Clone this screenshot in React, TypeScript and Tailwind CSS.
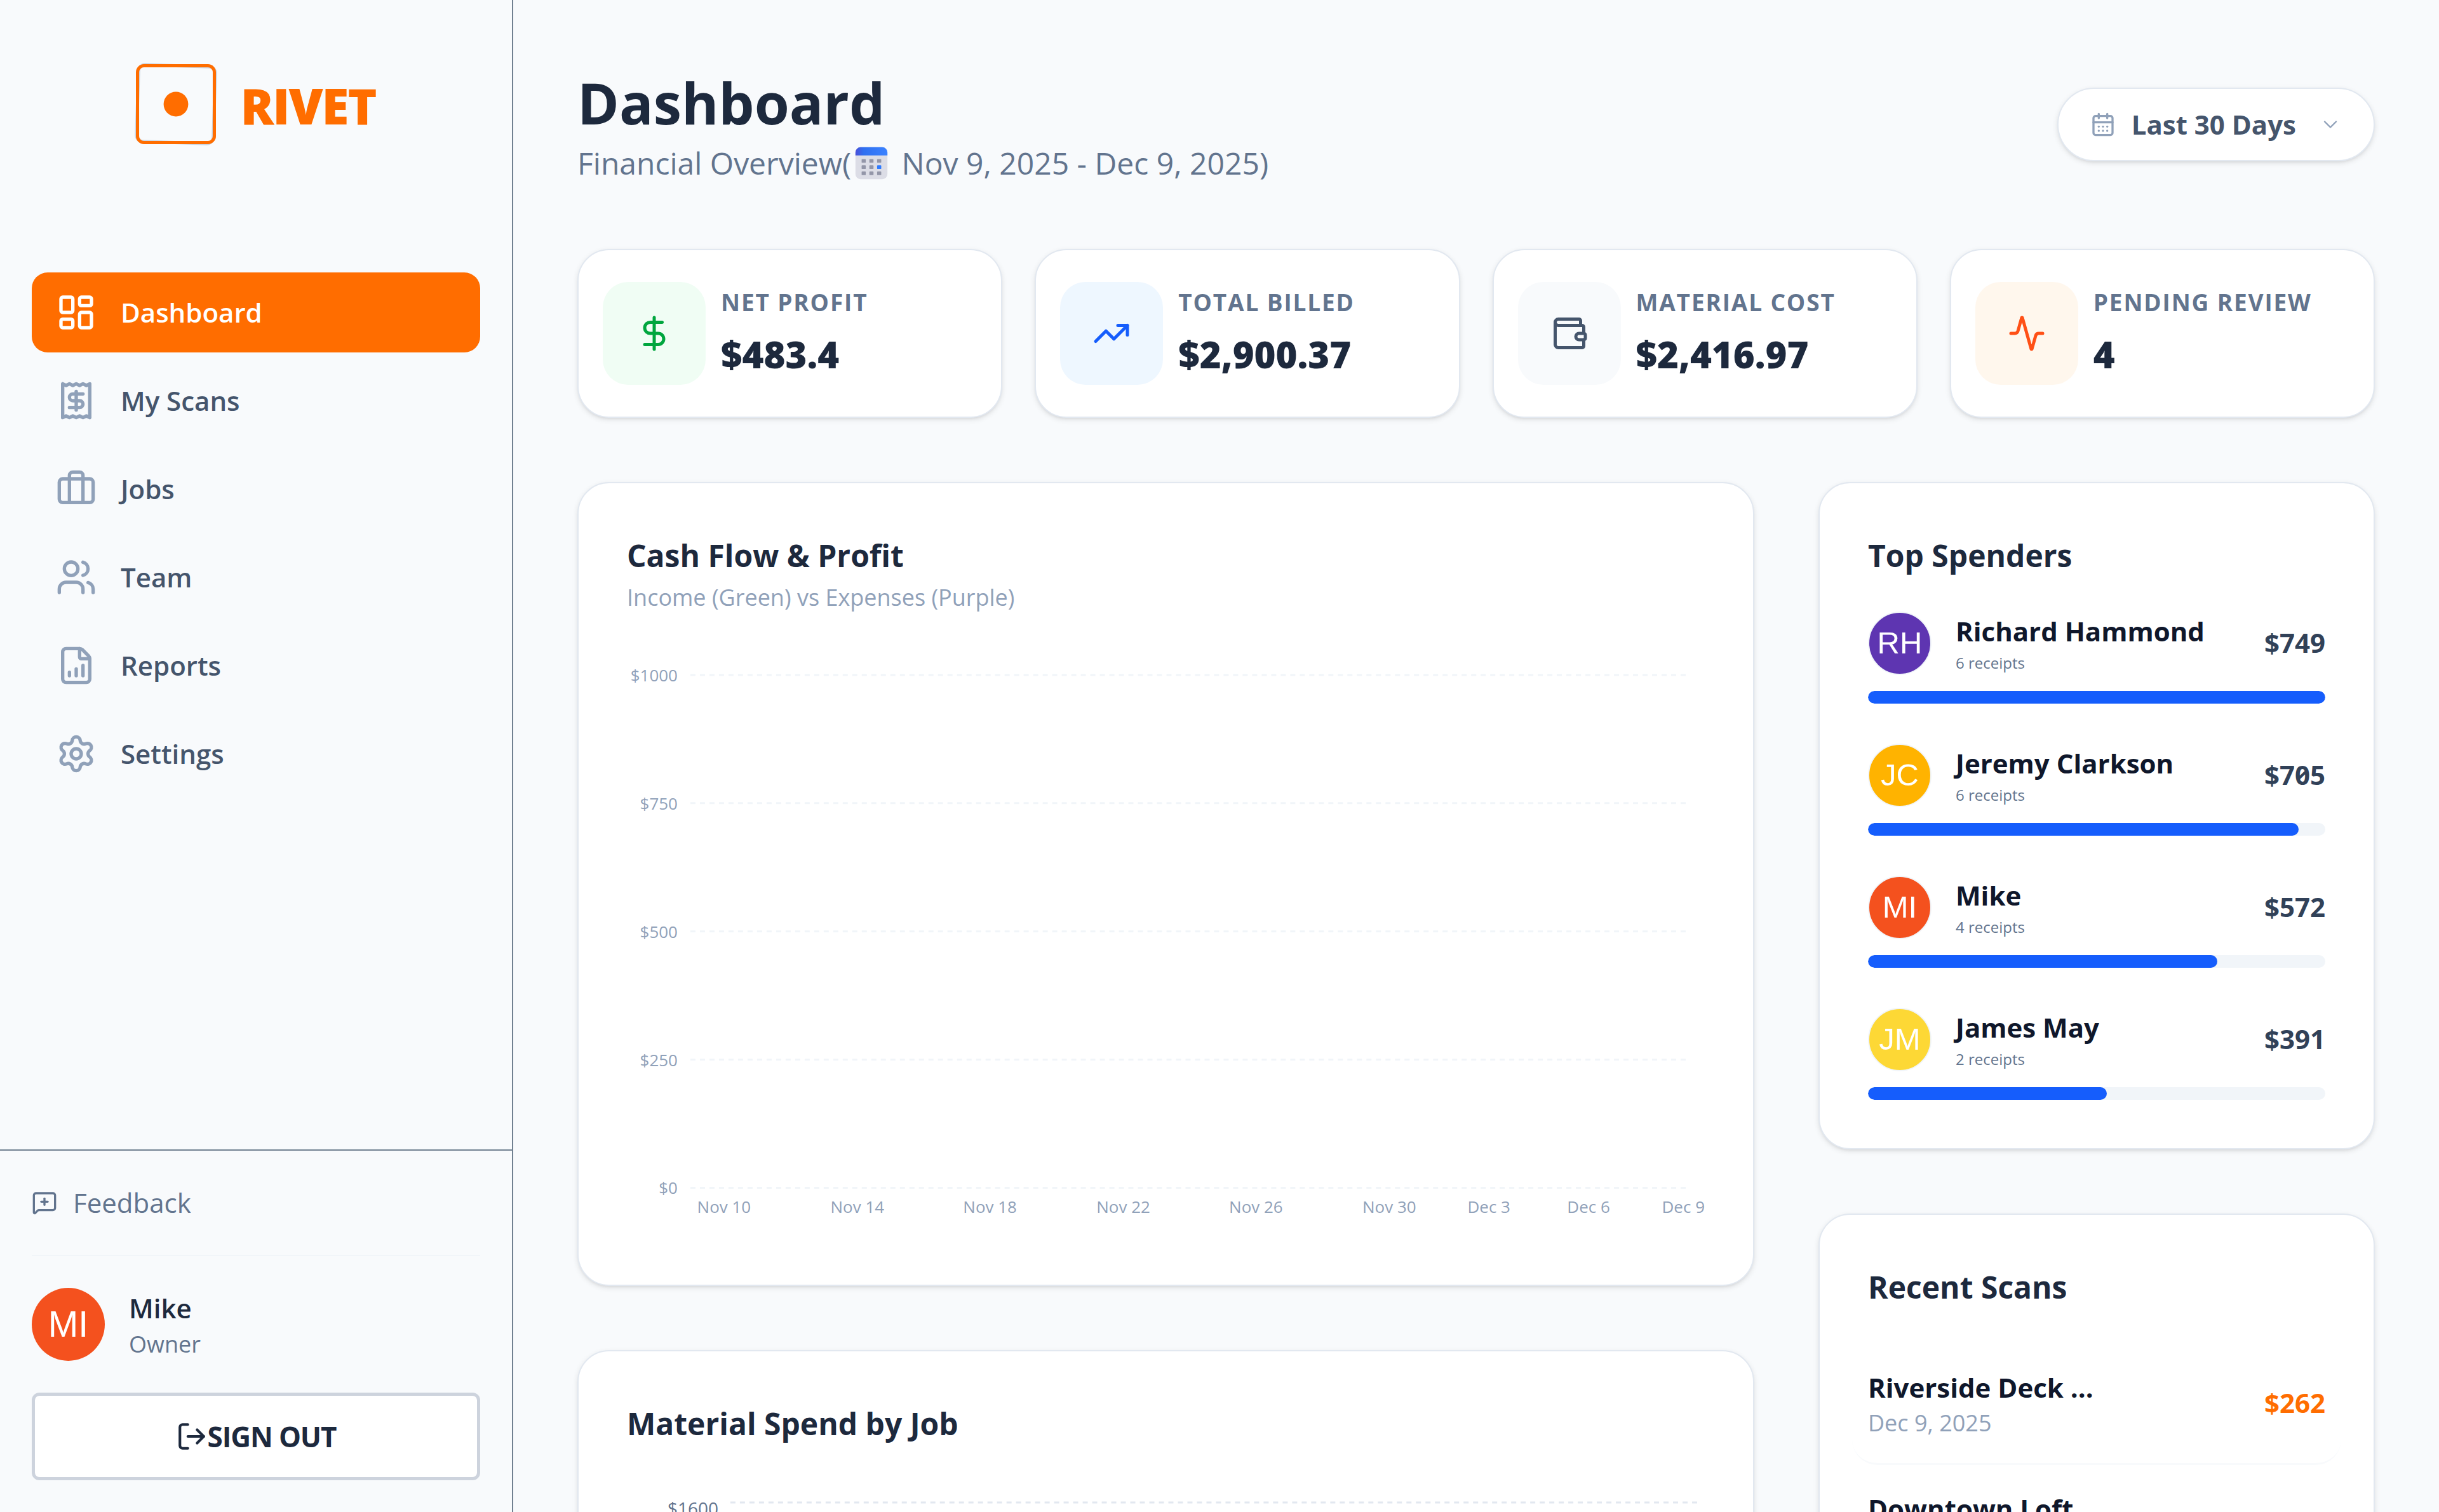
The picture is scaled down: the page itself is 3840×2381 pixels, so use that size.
import React from "react";
import {
  Activity,
  Briefcase,
  CalendarDays,
  ChevronDown,
  DollarSign,
  FileChartColumnIncreasing,
  LayoutDashboard,
  LogOut,
  MessageSquarePlus,
  Receipt,
  Settings,
  TrendingUp,
  Users,
  Wallet,
} from "lucide-react";
import clsx from "clsx";

const navItems = [
  { label: "Dashboard", icon: LayoutDashboard, active: true },
  { label: "My Scans", icon: Receipt },
  { label: "Jobs", icon: Briefcase },
  { label: "Team", icon: Users },
  { label: "Reports", icon: FileChartColumnIncreasing },
  { label: "Settings", icon: Settings },
];

const stats = [
  { label: "NET PROFIT", value: "$483.4", icon: DollarSign, tone: "bg-green-50 text-green-600" },
  { label: "TOTAL BILLED", value: "$2,900.37", icon: TrendingUp, tone: "bg-[#eef7ff] text-blue-600" },
  { label: "MATERIAL COST", value: "$2,416.97", icon: Wallet, tone: "bg-slate-50 text-slate-600" },
  { label: "PENDING REVIEW", value: "4", icon: Activity, tone: "bg-orange-50 text-[#ff5016]" },
];

const spenders = [
  { name: "Richard Hammond", initials: "RH", receipts: 6, amount: 749, color: "bg-[#5e35b1]" },
  { name: "Jeremy Clarkson", initials: "JC", receipts: 6, amount: 705, color: "bg-[#ffb300]" },
  { name: "Mike", initials: "MI", receipts: 4, amount: 572, color: "bg-[#f4511e]" },
  { name: "James May", initials: "JM", receipts: 2, amount: 391, color: "bg-[#fdd835]" },
];

const scans = [
  { name: "Riverside Deck ...", date: "Dec 9, 2025", amount: "$262" },
  { name: "Downtown Loft" },
];

const cashTicks = ["$1000", "$750", "$500", "$250", "$0"];

// day = days after Nov 9
const cashDays = [
  { label: "Nov 10", day: 1 },
  { label: "Nov 14", day: 5 },
  { label: "Nov 18", day: 9 },
  { label: "Nov 22", day: 13 },
  { label: "Nov 26", day: 17 },
  { label: "Nov 30", day: 21 },
  { label: "Dec 3", day: 24 },
  { label: "Dec 6", day: 27 },
];

const Logo = () => (
  <div className="flex items-center justify-center gap-[38px]">
    <svg viewBox="0 0 50 50" className="size-[126px] overflow-visible" fill="none" aria-hidden="true">
      <rect x="1" y="1" width="48" height="48" rx="4" stroke="#cbd5e1" strokeWidth="2" transform="rotate(2 25 25)" />
      <rect x="1" y="1" width="48" height="48" rx="4" stroke="#ff6d00" strokeWidth="2" />
      <circle cx="25" cy="25" r="7.7" fill="#ff6d00" />
    </svg>
    <span className="pt-1 text-[78px] leading-[90px] font-extrabold tracking-tight text-[#ff6d00]">RIVET</span>
  </div>
);

const CalendarEmoji = () => (
  <svg viewBox="0 0 32 32" className="mr-[9px] ml-[6px] inline-block size-[52px] align-[-8px]" aria-hidden="true">
    <defs>
      <linearGradient id="calTop" x1="0" y1="0" x2="1" y2="0">
        <stop offset="0" stopColor="#4a4fd8" />
        <stop offset="0.25" stopColor="#2f6ff0" />
        <stop offset="1" stopColor="#3b82ff" />
      </linearGradient>
    </defs>
    <rect x="0.5" y="0.5" width="31" height="31" rx="5" fill="#dcdde6" />
    <path d="M0.5 8.5V5.5a5 5 0 0 1 5-5h21a5 5 0 0 1 5 5v3z" fill="url(#calTop)" />
    <g fill="#9396a8">
      <rect x="6.5" y="12" width="4" height="3.6" rx="0.6" />
      <rect x="14" y="12" width="4" height="3.6" rx="0.6" />
      <rect x="21.5" y="12" width="4" height="3.6" rx="0.6" />
      <rect x="6.5" y="18" width="4" height="3.6" rx="0.6" />
      <rect x="14" y="18" width="4" height="3.6" rx="0.6" />
      <rect x="6.5" y="24" width="4" height="3.6" rx="0.6" />
      <rect x="14" y="24" width="4" height="3.6" rx="0.6" />
      <rect x="21.5" y="24" width="4" height="3.6" rx="0.6" />
    </g>
    <rect x="21.5" y="18" width="4" height="3.6" rx="0.6" fill="#2f7bff" />
  </svg>
);

interface CardProps {
  className?: string;
  children: React.ReactNode;
}

const Card: React.FC<CardProps> = ({ className, children }) => (
  <section
    className={clsx(
      "rounded-[50px] border-2 border-slate-200 bg-white shadow-[0_3px_8px_rgba(0,0,0,0.1),0_3px_5px_-3px_rgba(0,0,0,0.1)]",
      className
    )}
  >
    {children}
  </section>
);

const CardTitle: React.FC<CardProps> = ({ children }) => (
  <h2 className="text-[48px] leading-[76px] font-bold text-slate-800">{children}</h2>
);

const Sidebar = () => (
  <aside className="flex h-full w-[808px] shrink-0 flex-col border-r-2 border-[#708090]">
    <div className="px-[50px] pt-[101px] pb-[202px]">
      <Logo />
    </div>
    <nav className="flex flex-1 flex-col gap-[13px] px-[50px]">
      {navItems.map(({ label, icon: Icon, active }) => (
        <a
          key={label}
          href="#"
          className={clsx(
            "flex items-center gap-[38px] rounded-[25px] px-[38px] py-[31px] text-[42px] leading-[64px] font-semibold",
            active ? "bg-[#ff6d00] text-white" : "text-slate-600"
          )}
        >
          <Icon className={clsx("size-[64px]", !active && "text-slate-400")} />
          {label}
        </a>
      ))}
    </nav>
    <div className="border-t-2 border-[#708090] p-[50px]">
      <a href="#" className="flex items-center gap-[25px] pb-[50px] text-[42px] leading-[64px] text-slate-500">
        <MessageSquarePlus className="size-[40px]" />
        Feedback
      </a>
      <div className="flex items-center gap-[38px] border-t-2 border-slate-100 py-[50px]">
        <div className="flex size-[115px] items-center justify-center rounded-full bg-[#f4511e] font-['Liberation_Sans',sans-serif] text-[57px] text-white">
          MI
        </div>
        <div>
          <p className="text-[42px] leading-[62px] font-semibold text-slate-800">Mike</p>
          <p className="text-[36px] leading-[52px] text-slate-500">Owner</p>
        </div>
      </div>
      <button className="flex w-full items-center justify-center rounded-[12px] border-[5px] border-[#cdd3dd] bg-white py-[32px] text-[44px] leading-[64px] font-bold tracking-tight text-slate-800">
        <LogOut className="size-[50px]" />
        SIGN OUT
      </button>
    </div>
  </aside>
);

const CashFlowChart = () => (
  <svg
    viewBox="0 0 1698 896"
    className="mt-[84px] block h-auto w-full overflow-visible"
    role="img"
    aria-label="Cash Flow & Profit"
  >
    {cashTicks.map((tick, i) => (
      <g key={tick}>
        <text x="80" y={21 + i * 202} textAnchor="end" className="fill-slate-400 text-[26px]">
          {tick}
        </text>
        <line
          x1="100"
          x2="1671"
          y1={11 + i * 202}
          y2={11 + i * 202}
          strokeWidth="3"
          strokeDasharray="8 7"
          className="stroke-slate-100"
        />
      </g>
    ))}
    {cashDays.map(({ label, day }) => (
      <text key={label} x={101 + Math.round(day * 52.37)} y="859" textAnchor="middle" className="fill-slate-400 text-[26px]">
        {label}
      </text>
    ))}
    <text x="1698" y="859" textAnchor="end" className="fill-slate-400 text-[26px]">
      Dec 9
    </text>
  </svg>
);

const MaterialSpendChart = () => (
  <svg
    viewBox="0 0 1698 896"
    className="mt-[50px] block h-auto w-full overflow-visible"
    role="img"
    aria-label="Material Spend by Job"
  >
    {["$1600", "$1200", "$800", "$400", "$0"].map((tick, i) => (
      <g key={tick}>
        <text x="144" y={56 + i * 202} textAnchor="end" className="fill-slate-500 text-[28px]">
          {tick}
        </text>
        <line
          x1="163"
          x2="1686"
          y1={36 + i * 202}
          y2={36 + i * 202}
          strokeWidth="3"
          strokeDasharray="8 7"
          className="stroke-slate-200"
        />
      </g>
    ))}
  </svg>
);

export default function App() {
  const topAmount = spenders[0].amount;

  return (
    <div className="flex h-screen overflow-hidden bg-slate-50 font-['Open_Sans','Noto_Sans',sans-serif]">
      <Sidebar />
      <main className="min-w-0 flex-1 overflow-y-auto p-[101px] [scrollbar-width:none]">
        <header className="flex items-center justify-between">
          <div>
            <h1 className="text-[89px] leading-[122px] font-bold text-slate-800">Dashboard</h1>
            <p className="text-[48px] leading-[68px] text-slate-500">
              Financial Overview(
              <CalendarEmoji /> Nov 9, 2025 - Dec 9, 2025)
            </p>
          </div>
          <button
            aria-haspopup="listbox"
            className="flex items-center rounded-full border-2 border-slate-200 bg-white px-[50px] py-[25px] text-[42px] leading-[62px] font-bold text-slate-600 shadow-[0_3px_8px_rgba(0,0,0,0.1),0_3px_5px_-3px_rgba(0,0,0,0.1)]"
          >
            <CalendarDays className="mr-[25px] size-[40px] text-slate-400" />
            Last 30 Days
            <ChevronDown className="ml-[36px] size-[36px] text-slate-400" strokeWidth={1.6} />
          </button>
        </header>

        <div className="mt-[101px] grid grid-cols-4 gap-[51px]">
          {stats.map(({ label, value, icon: Icon, tone }) => (
            <Card key={label} className="flex items-center gap-[24px] px-[38px] py-[50px]">
              <div className={clsx("flex size-[162px] shrink-0 items-center justify-center rounded-[40px]", tone)}>
                <Icon className="size-[60px]" />
              </div>
              <div className="min-w-0">
                <p className="text-[37px] leading-[56px] font-bold tracking-wider whitespace-nowrap text-slate-500">{label}</p>
                <p className="mt-[10px] text-[58px] leading-[88px] font-extrabold text-slate-800">{value}</p>
              </div>
            </Card>
          ))}
        </div>

        <div className="mt-[101px] grid grid-cols-3 items-start gap-[101px]">
          <div className="col-span-2 flex flex-col gap-[101px]">
            <Card className="p-[76px]">
              <CardTitle>Cash Flow &amp; Profit</CardTitle>
              <p className="text-[36px] leading-[55px] text-slate-400">Income (Green) vs Expenses (Purple)</p>
              <CashFlowChart />
            </Card>
            <Card className="p-[76px]">
              <CardTitle>Material Spend by Job</CardTitle>
              <MaterialSpendChart />
            </Card>
          </div>

          <div className="flex flex-col gap-[101px]">
            <Card className="p-[76px]">
              <CardTitle>Top Spenders</CardTitle>
              <ul className="mt-[50px] flex flex-col gap-[63px]">
                {spenders.map(({ name, initials, receipts, amount, color }) => (
                  <li key={name}>
                    <div className="flex items-center">
                      <div
                        className={clsx(
                          "flex size-[100px] shrink-0 items-center justify-center rounded-full border-2 border-slate-100 font-['Liberation_Sans',sans-serif] text-[49px] text-white",
                          color
                        )}
                      >
                        {initials}
                      </div>
                      <div className="ml-[38px] flex-1">
                        <p className="text-[42px] leading-[62px] font-bold text-slate-900">{name}</p>
                        <p className="text-[24px] leading-[38px] text-slate-500">{receipts} receipts</p>
                      </div>
                      <span className="pb-1 text-[42px] font-bold text-slate-700 slashed-zero">${amount}</span>
                    </div>
                    <div className="mt-[25px] h-[20px] overflow-hidden rounded-full bg-slate-100">
                      <div className="h-full rounded-full bg-blue-600" style={{ width: `${(amount / topAmount) * 100}%` }} />
                    </div>
                  </li>
                ))}
              </ul>
            </Card>

            <Card className="p-[76px]">
              <CardTitle>Recent Scans</CardTitle>
              <ul className="-mx-[25px] mt-[51px]">
                {scans.map(({ name, date, amount }) => (
                  <li
                    key={name}
                    className="flex items-center justify-between rounded-[40px] border-b-[3px] border-slate-50 px-[25px] py-[38px]"
                  >
                    <div>
                      <p className="text-[42px] leading-[62px] font-bold text-slate-900">{name}</p>
                      {date && <p className="text-[36px] leading-[50px] text-slate-400">{date}</p>}
                    </div>
                    {amount && <span className="pb-1 text-[42px] font-bold text-[#ff6d00] slashed-zero">{amount}</span>}
                  </li>
                ))}
              </ul>
            </Card>
          </div>
        </div>
      </main>
    </div>
  );
}
